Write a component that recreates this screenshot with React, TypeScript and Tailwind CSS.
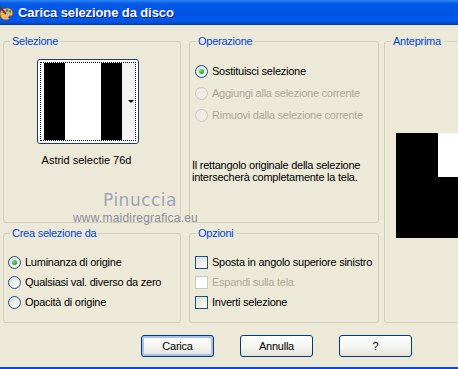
import type { ReactNode } from 'react';

const Group = ({ title, className, children }: { title: string; className: string; children?: ReactNode }) => (
  <fieldset className={`border border-[#D0D0BF] rounded-[3px] shrink-0 ${className}`}>
    <legend className="ml-[6px] px-[2px] leading-[13px] text-[#0046D5]">{title}</legend>
    {children}
  </fieldset>
);

const Radio = ({ label, checked, disabled, h }: { label: string; checked?: boolean; disabled?: boolean; h: string }) => (
  <div className={`flex items-center gap-[4px] whitespace-nowrap ${h}`}>
    <span
      className={`w-[13px] h-[13px] rounded-full border flex items-center justify-center shrink-0 ${
        disabled ? 'border-[#CAC8BB] bg-[#EFEDE3]' : 'border-[#1C5180] bg-[linear-gradient(135deg,#DCDCD7,#FFFFFF)]'
      }`}
    >
      {checked && <span className="w-[5px] h-[5px] rounded-full bg-[radial-gradient(circle_at_35%_35%,#7BE27A,#21A121_70%)]" />}
    </span>
    <span className={disabled ? 'text-[#ACA899]' : ''}>{label}</span>
  </div>
);

const Check = ({ label, disabled }: { label: string; disabled?: boolean }) => (
  <div className="flex items-center gap-[4px] h-[20px] whitespace-nowrap">
    <span
      className={`w-[13px] h-[13px] border shrink-0 ${
        disabled ? 'border-[#CAC8BB] bg-white' : 'border-[#1C5180] bg-[linear-gradient(135deg,#DCDCD7,#FFFFFF)]'
      }`}
    />
    <span className={disabled ? 'text-[#ACA899]' : ''}>{label}</span>
  </div>
);

const Button = ({ label, isDefault }: { label: string; isDefault?: boolean }) => (
  <button
    className={`w-[73px] h-[22px] rounded-[3px] border border-[#003C74] bg-[linear-gradient(to_bottom,#FFFFFF,#F3F3EF_60%,#E3E1D8)] flex items-center justify-center ${
      isDefault ? 'shadow-[inset_0_0_0_2px_#A6C0EE]' : ''
    }`}
  >
    {label}
  </button>
);

const Palette = () => (
  <svg width="16" height="16" viewBox="0 0 16 16" className="shrink-0">
    <path d="M2 9c0-4 4-6 7-6s6 2 6 5-2 3-3 3-2 1-1 2-1 2-3 2C4 15 2 12 2 9z" fill="#E9B274" stroke="#8A4B1A" strokeWidth="0.8" />
    <circle cx="6" cy="7" r="1.3" fill="#E02A1A" />
    <circle cx="9" cy="5.5" r="1.2" fill="#2A6BE0" />
    <circle cx="12" cy="6.5" r="1.2" fill="#2BA83A" />
    <circle cx="5.5" cy="11" r="1.2" fill="#F2D21B" />
    <path d="M1 1l7 8" stroke="#5A3A1A" strokeWidth="1.6" />
  </svg>
);

export default function App() {
  return (
    <div className="relative w-[458px] h-[369px] overflow-hidden bg-[#ECE9D8] font-['Liberation_Sans',Arial,sans-serif] text-[11px] tracking-[-0.25px] text-black flex flex-col">
      <div className="h-[25px] shrink-0 flex items-center gap-[4px] bg-[linear-gradient(to_bottom,#2E84F5_0%,#0A5FE8_12%,#0057E5_25%,#0055E6_60%,#005AF0_75%,#0050D8_90%,#003BAA_100%)]">
        <div className="-ml-[2px]">
          <Palette />
        </div>
        <span className="text-white font-bold text-[13px] tracking-[-0.1px] [text-shadow:1px_1px_#0A1E8C] mt-[1px]">
          Carica selezione da disco
        </span>
      </div>

      <div className="flex pl-[3px] pt-[10px]">
        <div className="flex flex-col w-[178px] gap-[4px] shrink-0">
          <Group title="Selezione" className="h-[188px]">
            <div className="ml-[33px] w-[102px] flex flex-col items-center mt-[11px]">
              <div className="w-[102px] h-[85px] rounded-[3px] border border-[#1C3F6E] bg-white p-[2px]">
                <div className="h-full border border-dotted border-black flex pl-[3px]">
                  <div className="w-[21px] bg-black" />
                  <div className="w-[36px] bg-white" />
                  <div className="w-[21px] bg-black" />
                  <div className="flex-1 bg-[#F2F2F2] flex items-center justify-end pr-[1px]">
                    <div className="w-0 h-0 border-l-[3px] border-r-[3px] border-t-[3px] border-l-transparent border-r-transparent border-t-black" />
                  </div>
                </div>
              </div>
              <div className="mt-[10px] leading-[13px] -ml-[3px] whitespace-nowrap tracking-[0px]">Astrid selectie 76d</div>
            </div>
          </Group>
          <Group title="Crea selezione da" className="h-[96px]">
            <div className="pl-[4px] mt-[12px]">
              <Radio label="Luminanza di origine" checked h="h-[20px]" />
              <Radio label="Qualsiasi val. diverso da zero" h="h-[20px]" />
              <Radio label="Opacità di origine" h="h-[20px]" />
            </div>
          </Group>
        </div>

        <div className="flex flex-col w-[190px] gap-[4px] ml-[8px] shrink-0">
          <Group title="Operazione" className="h-[188px]">
            <div className="pl-[5px] mt-[12px]">
              <Radio label="Sostituisci selezione" checked h="h-[22px]" />
              <Radio label="Aggiungi alla selezione corrente" disabled h="h-[22px]" />
              <Radio label="Rimuovi dalla selezione corrente" disabled h="h-[22px]" />
            </div>
            <p className="pl-[2px] mt-[33px] leading-[12px] whitespace-nowrap">
              Il rettangolo originale della selezione
              <br />
              intersecherà completamente la tela.
            </p>
          </Group>
          <Group title="Opzioni" className="h-[96px]">
            <div className="pl-[5px] mt-[12px]">
              <Check label="Sposta in angolo superiore sinistro" />
              <Check label="Espandi sulla tela" disabled />
              <Check label="Inverti selezione" />
            </div>
          </Group>
        </div>

        <Group title="Anteprima" className="ml-[5px] w-[90px] h-[288px]">
          <div className="ml-[11px] mt-[85px] w-[100px] h-[105px] bg-black flex justify-end items-start">
            <div className="w-[58px] h-[44px] bg-white" />
          </div>
        </Group>
      </div>

      <div className="flex pl-[141px] gap-[26px] mt-[12px]">
        <Button label="Carica" isDefault />
        <Button label="Annulla" />
        <Button label="?" />
      </div>

      <div className="mt-auto h-[2px] bg-[#0A48E6]" />

      <div className="absolute left-[103px] top-[191px] text-[17px] leading-[18px] text-[#A0A2BC] font-['DejaVu_Sans',sans-serif] tracking-[0.5px] pointer-events-none">
        Pinuccia
      </div>
      <div className="absolute left-[73px] top-[212px] text-[12px] leading-[13px] text-[#8C8C9A] tracking-[0.2px] pointer-events-none">
        www.maidiregrafica.eu
      </div>
    </div>
  );
}
